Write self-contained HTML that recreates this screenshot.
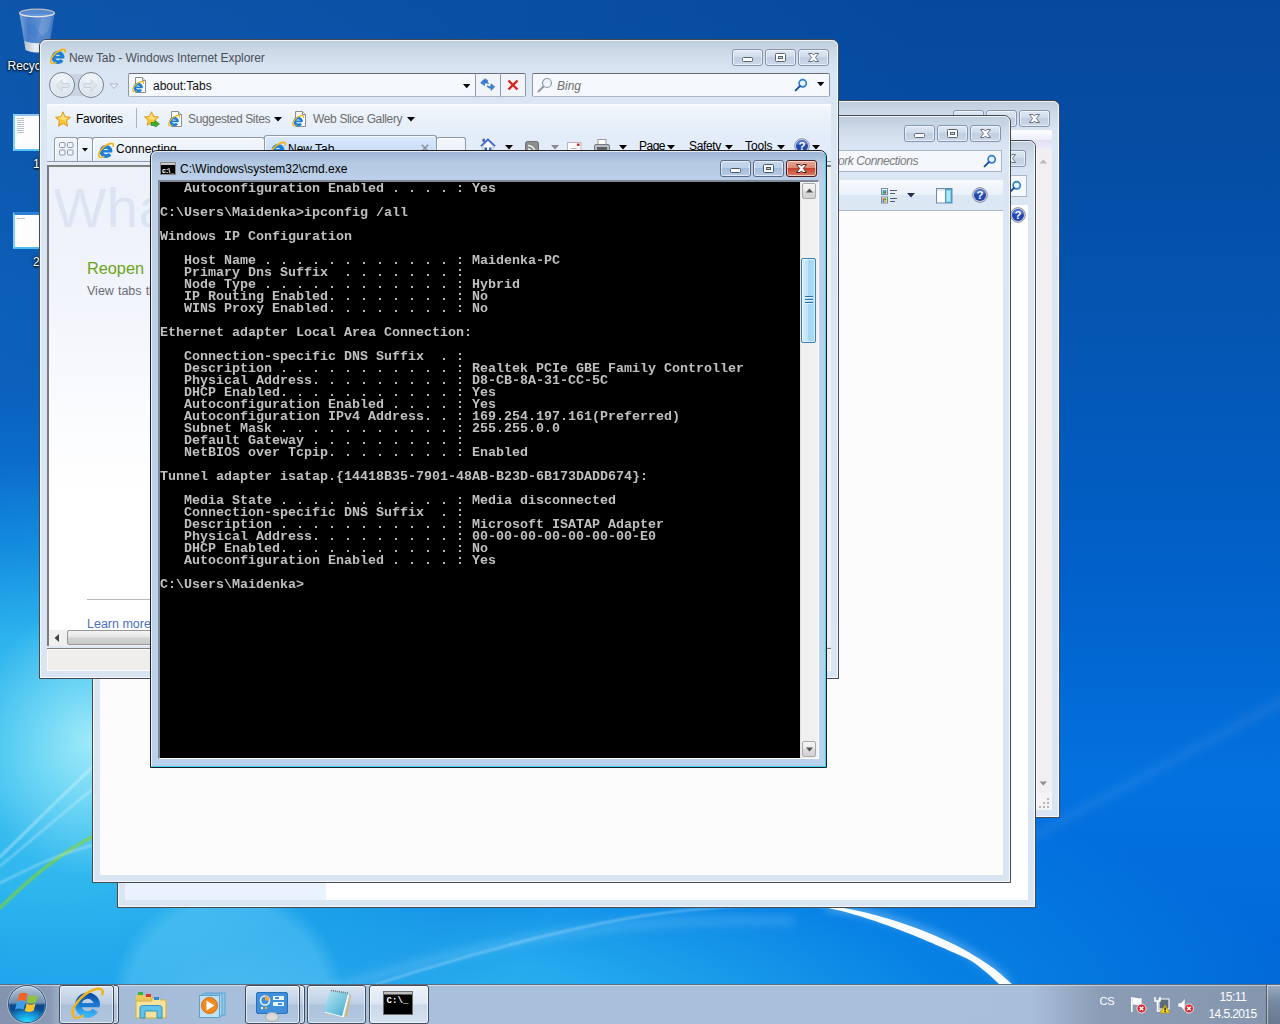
<!DOCTYPE html>
<html lang="en">
<head>
<meta charset="utf-8">
<title>Desktop</title>
<style>
*{box-sizing:border-box;margin:0;padding:0}
html,body{width:1280px;height:1024px;overflow:hidden}
body{position:relative;font-family:"Liberation Sans",sans-serif;font-size:12px;color:#000;background:#0a5fb8}
.abs{position:absolute}
#wall{left:0;top:0;width:1280px;height:1024px;
 background:
 radial-gradient(circle 118px at 228px 1004px, rgba(160,232,250,.30) 0%, rgba(160,232,250,.24) 85%, rgba(160,232,250,0) 100%),
 radial-gradient(ellipse 120px 135px at 92px 742px, rgba(175,241,251,.85) 0%, rgba(150,233,249,.5) 50%, rgba(130,226,248,0) 100%),
 radial-gradient(ellipse 560px 370px at 55px 765px, rgba(70,196,241,1) 0%, rgba(46,182,238,.96) 35%, rgba(24,158,232,.66) 60%, rgba(12,128,222,.3) 82%, rgba(8,110,210,0) 100%),
 radial-gradient(ellipse 1150px 330px at 200px 1050px, rgba(62,194,243,1) 0%, rgba(40,178,240,.9) 38%, rgba(12,148,238,.58) 68%, rgba(6,120,226,0) 100%),
 linear-gradient(90deg, rgba(40,130,215,.22) 0%, rgba(40,130,215,.13) 35%, rgba(40,130,215,0) 72%),
 linear-gradient(180deg,#05499d 0%,#054da4 15%,#0457b4 35%,#0160c8 55%,#0372e0 77%,#0066d6 97%);}
/* generic window */
.win{position:absolute;border:1px solid #44484f;border-radius:7px 7px 0 0}
.win.inact{background:linear-gradient(180deg,#bfccdc 0px,#cbd8e6 11px,#d6e2ef 24px,#dae6f3 36px,#d9e5f3 100%)}
.win.act{background:linear-gradient(180deg,#9bb4d3 0px,#b4c9e3 12px,#bcd0e8 30px,#b9d1ea 100%)}
.win::before{content:"";position:absolute;left:0;top:0;right:0;bottom:0;border:1px solid rgba(255,255,255,.75);border-radius:6px 6px 0 0;pointer-events:none}
.win.act{border-color:#1c1e22}
.win.act::before{border-right-color:#35d2f3;border-bottom-color:#35d2f3}
.cap{position:absolute;height:17px;width:31px;border:1px solid #8593b2;border-radius:3px;background:linear-gradient(180deg,#dfe8f3 0%,#d0dcea 45%,#c0cfe1 50%,#cbd8e8 100%);box-shadow:inset 0 0 0 1px rgba(255,255,255,.6)}
.cap svg{position:absolute;left:-1px;top:-1px}
.cap.red{background:linear-gradient(180deg,#eaa898 0%,#dd8673 47%,#c5432c 50%,#d97f66 100%);border-color:#4c1d1c}
.t{position:absolute;white-space:pre;line-height:1}
.navc{width:26px;height:26px;border-radius:13px;border:1px solid #707b8d;background:radial-gradient(circle at 50% 30%,#f4f7fb 0%,#e3e9f1 55%,#d3dbe6 100%);box-shadow:inset 0 0 0 1px rgba(255,255,255,.7)}
.tab{border:1px solid #8e99a8;border-bottom:none;border-radius:3px 3px 0 0;background:linear-gradient(180deg,#f3f7fc 0%,#e6eef9 100%);box-shadow:inset 1px 1px 0 rgba(255,255,255,.8)}
.tbtn{border:1px solid #414c5e;border-radius:3px;background:linear-gradient(180deg,rgba(235,242,250,.75) 0%,rgba(205,219,236,.55) 48%,rgba(178,198,222,.45) 52%,rgba(190,208,230,.5) 100%);box-shadow:inset 0 0 0 1px rgba(255,255,255,.6)}
.tbtn.on{background:linear-gradient(180deg,#eef3f9 0%,#dde7f3 48%,#c9d8ea 52%,#d6e2f0 100%)}
</style>
</head>
<body>
<svg width="0" height="0" style="position:absolute;left:0;top:0"><defs>
<symbol id="ie" viewBox="0 0 32 32"><defs><linearGradient id="ieg" x1="0" y1="0" x2="0" y2="1"><stop offset="0" stop-color="#0c4fa8"/><stop offset=".55" stop-color="#1f86dc"/><stop offset="1" stop-color="#37b4f2"/></linearGradient></defs><path d="M24.040 22.430A8.600 8.600 0 1 1 25.600 17.500" fill="none" stroke="url(#ieg)" stroke-width="5.800"/><path d="M9 17.500h19" stroke="#1b78d2" stroke-width="3.800"/><path d="M5 28.500C-1.500 22 12.500 6.500 24 3c5-1.500 8 .5 6.500 4.500" fill="none" stroke="#f3b417" stroke-width="2.300" stroke-linecap="round"/><path d="M5 28.500c1.500 1.500 5 .5 8-1.500" fill="none" stroke="#f3b417" stroke-width="1.700" stroke-linecap="round"/></symbol>
<symbol id="ies" viewBox="0 0 32 32"><path d="M24.300 22.800A8.800 8.800 0 1 1 25.800 17.500" fill="none" stroke="#1b7fd8" stroke-width="7"/><path d="M9 17.500h19.500" stroke="#1b7fd8" stroke-width="4.600"/><path d="M5 28.500C-1.500 22 12.500 6.500 24 3c5-1.500 8 .5 6.500 4.500" fill="none" stroke="#f3b417" stroke-width="3.200" stroke-linecap="round"/><path d="M5 28.500c1.500 1.500 5 .5 8-1.500" fill="none" stroke="#f3b417" stroke-width="2.400" stroke-linecap="round"/></symbol>
<symbol id="iepg" viewBox="0 0 16 16"><path d="M3.500.5h7l3 3v12h-10z" fill="#fff" stroke="#8d8d8d"/><path d="M10.500.5v3h3" fill="#e8e8e8" stroke="#8d8d8d"/><use href="#ies" x="-.5" y="3.500" width="12.500" height="12.500"/></symbol>
<symbol id="star" viewBox="0 0 16 16"><path d="M8 .8l2.200 4.900 5.300.6-4 3.600 1.100 5.300L8 12.500l-4.600 2.700 1.100-5.300-4-3.600 5.300-.6z" fill="#fbc62c" stroke="#d9921a" stroke-width=".9" stroke-linejoin="round"/><path d="M8 2.800l1.500 3.500 3.700.4-2.800 2.500.2.800C8 9 5.500 8.500 3 7l2.500-.6z" fill="#fde58a" fill-opacity=".8"/></symbol>
<symbol id="mag" viewBox="0 0 14 14"><circle cx="8.700" cy="5.300" r="3.600" fill="#e8f4fd" stroke="#2d7fd1" stroke-width="1.700"/><path d="M5.900 8.100l-4.300 4.300" stroke="#1b4f9a" stroke-width="2" stroke-linecap="round"/></symbol>
<symbol id="helpbg" viewBox="0 0 16 16"><circle cx="8" cy="8" r="7.400" fill="#c9ced8" stroke="#80889a" stroke-width=".8"/><circle cx="8" cy="8" r="6" fill="#2248b0"/><path d="M2.300 7a5.800 5.800 0 0 1 11.400 0C10 5.200 6 5.200 2.300 7z" fill="#5b82dc" fill-opacity=".8"/></symbol>
</defs></svg>
<div id="wall" class="abs"></div>
<svg class="abs" style="left:0;top:0" width="1280" height="1024">
 <defs><filter id="bl1"><feGaussianBlur stdDeviation=".7"/></filter><filter id="bl2"><feGaussianBlur stdDeviation="1.2"/></filter><filter id="bl5"><feGaussianBlur stdDeviation="4"/></filter></defs>
 <g fill="none" stroke-linecap="round">
  <path d="M300 1000C480 940 620 915 790 921" stroke="#fff" stroke-opacity=".13" stroke-width="10" filter="url(#bl5)"/>
  <path d="M830 906C880 912 940 935 970 953S1000 974 1012 984L1001 986C990 975 975 962 966 958S880 918 830 908.500Z" fill="#fff" fill-opacity=".97" stroke="none" filter="url(#bl1)"/>
  <path d="M830 907C880 912 940 935 970 954S1000 975 1008 985" stroke="#fff" stroke-opacity=".35" stroke-width="7" filter="url(#bl5)"/>
  <path d="M330 1000C450 958 590 920 680 911S790 905 830 907" stroke="#fff" stroke-opacity=".42" stroke-width="1.600" filter="url(#bl2)"/>
  <path d="M0 908C30 878 60 853 94 836" stroke="#86d628" stroke-width="2.200" filter="url(#bl2)"/>
  <path d="M0 857C30 828 60 797 94 766" stroke="#fff" stroke-opacity=".6" stroke-width="1.600" filter="url(#bl2)"/>
  <path d="M0 866C30 842 60 815 94 788" stroke="#fff" stroke-opacity=".5" stroke-width="1.400" filter="url(#bl2)"/>
  <path d="M0 883C30 868 60 853 94 845" stroke="#fff" stroke-opacity=".5" stroke-width="1.600" filter="url(#bl2)"/>
  <path d="M1030 838L1290 697" stroke="#fff" stroke-opacity=".09" stroke-width="7" filter="url(#bl5)"/>
 </g>
</svg>
<!-- desktop icons -->
<svg class="abs" style="left:14px;top:6px" width="44" height="50" viewBox="0 0 44 50"><defs><linearGradient id="rb" x1="0" y1="0" x2="1" y2="0"><stop offset="0" stop-color="#9cbbe6" stop-opacity=".75"/><stop offset=".25" stop-color="#5f8fd4" stop-opacity=".7"/><stop offset=".6" stop-color="#7ea6e0" stop-opacity=".7"/><stop offset="1" stop-color="#4f7fca" stop-opacity=".8"/></linearGradient><linearGradient id="rbb" x1="0" y1="0" x2="1" y2="0"><stop offset="0" stop-color="#b9c2cf"/><stop offset=".45" stop-color="#f4f6f8"/><stop offset="1" stop-color="#aab3c0"/></linearGradient></defs><path d="M5.500 8L11.500 44Q23 49 34.500 44L40.500 8Z" fill="url(#rb)"/><path d="M28 10l10 1-4 14-12 10z" fill="#fff" fill-opacity=".12"/><path d="M10.300 35Q23 39.500 35.700 35L34.500 44Q23 49 11.500 44Z" fill="url(#rbb)" fill-opacity=".95"/><path d="M14 20c3-3 7-2 8 2s5 4 6 8-3 6-6 4-3-6-6-6-4-5-2-8z" fill="#3f6fd0" fill-opacity=".35"/><ellipse cx="23" cy="7" rx="17.500" ry="3.800" fill="#6d9ee0" fill-opacity=".75" stroke="#b9bcc2" stroke-width="1.300"/><path d="M5.700 7.500a17.500 3.800 0 0 0 34.600 0" fill="none" stroke="#f2f2f2" stroke-width=".9"/></svg>
<div class="t" style="left:7.500px;top:60px;font-size:12px;color:#fff;text-shadow:0 1px 2px #000,0 0 3px #000">Recycle Bin</div>
<div class="abs" style="left:13px;top:114px;width:44px;height:37px;background:#fdfdfd;border:2px solid #58c3ee;border-top-color:#8fc4ee;border-left-color:#7fd2f3"><div class="abs" style="left:2px;top:2px;width:7px;height:16px;background:repeating-linear-gradient(180deg,#b9c4d2 0,#b9c4d2 1px,#fff 1px,#fff 2px)"></div></div>
<div class="t" style="left:33px;top:158px;font-size:12px;color:#fff;text-shadow:0 1px 2px #000,0 0 3px #000">1</div>
<div class="abs" style="left:13px;top:212px;width:44px;height:37px;background:#fdfdfd;border:2px solid #4fbdec;border-top:3px solid #2f7fd6;border-left-color:#7fd2f3"><div class="abs" style="left:2px;top:3px;width:8px;height:1px;background:#b9c4d2"></div></div>
<div class="t" style="left:33px;top:256px;font-size:12px;color:#fff;text-shadow:0 1px 2px #000,0 0 3px #000">2</div>



<!-- Window A (back-most) -->
<div class="win inact" style="left:300px;top:100px;width:760px;height:718px">
  <div class="cap" style="left:652px;top:9px"></div>
  <div class="cap" style="left:685px;top:9px"></div>
  <div class="cap" style="left:718px;top:9px"><svg width="31" height="17"><path d="M10.500 4.500h3.600l1.400 1.600 1.400-1.600h3.600l-3.100 4 3.100 4h-3.600l-1.400-1.600-1.400 1.600h-3.600l3.100-4z" fill="#fff" stroke="#4b5563" stroke-width=".8"/></svg></div>
  <div class="abs" style="left:8px;top:29px;width:743px;height:19px;background:linear-gradient(180deg,#fdfdff 0%,#eeeefb 50%,#e1e1f4 55%,#ececfa 100%)"></div>
  <div class="abs" style="left:8px;top:48px;width:743px;height:661px;background:#fff"></div>
  <div class="abs" style="left:735px;top:48px;width:16px;height:661px;background:#f0f0f0;border-left:1px solid #fafafa"></div>
  <svg class="abs" style="left:734px;top:54px" width="17" height="12"><path d="M4.500 8.500l3.800-4 3.800 4z" fill="#b9b9b9"/></svg>
  <svg class="abs" style="left:734px;top:677px" width="17" height="12"><path d="M4.500 3.500l3.800 4 3.800-4z" fill="#8f8f8f"/></svg>
  <div class="abs" style="left:735px;top:692px;width:16px;height:17px;background:#f4f4f4"></div>
  <svg class="abs" style="left:737px;top:695px" width="14" height="13"><g fill="#b5b5b5"><rect x="9" y="2" width="2" height="2"/><rect x="9" y="6" width="2" height="2"/><rect x="5" y="6" width="2" height="2"/><rect x="9" y="10" width="2" height="2"/><rect x="5" y="10" width="2" height="2"/><rect x="1" y="10" width="2" height="2"/></g></svg>
</div>

<!-- Window B -->
<div class="win inact" style="left:117px;top:140px;width:919px;height:768px">
  <div class="cap" style="left:811px;top:9px"></div>
  <div class="cap" style="left:844px;top:9px"></div>
  <div class="cap" style="left:877px;top:9px"><svg width="31" height="17"><path d="M10.500 4.500h3.600l1.400 1.600 1.400-1.600h3.600l-3.100 4 3.100 4h-3.600l-1.400-1.600-1.400 1.600h-3.600l3.100-4z" fill="#fff" stroke="#4b5563" stroke-width=".8"/></svg></div>
  <div class="abs" style="left:700px;top:34px;width:209px;height:22px;background:#f4f7fb;border:1px solid #aab6c6"></div>
  <div class="abs" style="left:7px;top:64px;width:903px;height:695px;background:#fff"></div>
  <div class="abs" style="left:7px;top:64px;width:201px;height:695px;background:#e9f2fd"></div>

  <svg class="abs" style="left:890px;top:38.500px" width="14" height="14"><use href="#mag"/></svg>
  <svg class="abs" style="left:892px;top:66px" width="16" height="16" viewBox="0 0 16 16"><use href="#helpbg"/><text x="8" y="12.200" text-anchor="middle" font-family="Liberation Sans, sans-serif" font-weight="bold" font-size="11.500" fill="#fff">?</text></svg>
</div>

<!-- Window C : Network Connections -->
<div class="win inact" style="left:92px;top:115px;width:919px;height:768px">
  <div class="cap" style="left:811px;top:9px"><svg width="31" height="17"><rect x="10.500" y="8.500" width="10" height="4" rx="1" fill="#fff" stroke="#5a6472"/></svg></div>
  <div class="cap" style="left:844px;top:9px"><svg width="31" height="17"><rect x="10.500" y="4.500" width="10" height="8" rx="1" fill="#fff" stroke="#5a6472"/><rect x="13.500" y="7.500" width="4" height="2" fill="#c9d6e6" stroke="#5a6472"/></svg></div>
  <div class="cap" style="left:877px;top:9px"><svg width="31" height="17"><path d="M10.500 4.500h3.600l1.400 1.600 1.400-1.600h3.600l-3.100 4 3.100 4h-3.600l-1.400-1.600-1.400 1.600h-3.600l3.100-4z" fill="#fff" stroke="#4b5563" stroke-width=".8"/></svg></div>
  <div id="c-search" class="abs" style="left:700px;top:34px;width:209px;height:22px;background:#f4f7fb;border:1px solid #aab6c6"></div>
  <div class="t" id="c-stext" style="left:745px;top:39px;font-size:12px;letter-spacing:-.45px;font-style:italic;color:#7c7c7c">ork Connections</div>
  <div id="c-tool" class="abs" style="left:7px;top:64px;width:903px;height:31px;background:linear-gradient(180deg,#f7fafd 0%,#eaf1f9 48%,#dce7f4 52%,#dde8f5 100%);border-bottom:1px solid #a9b9d0"></div>

  <svg class="abs" style="left:890px;top:38px" width="14" height="14"><use href="#mag"/></svg>
  <svg class="abs" style="left:788px;top:72px" width="17" height="16" viewBox="0 0 17 16"><rect x=".5" y=".5" width="6" height="6" fill="#fff" stroke="#7a8aa0"/><rect x="1.500" y="2" width="4" height="3.500" fill="#5aa0d8"/><path d="M1.500 5.500l1.500-2 1 1 1-1.500v2.500z" fill="#3b8a3b"/><rect x=".5" y="9" width="6" height="6" fill="#fff" stroke="#7a8aa0"/><rect x="1.500" y="10.300" width="2" height="2" fill="#e5482e"/><rect x="3.500" y="10.300" width="2" height="2" fill="#3fae2a"/><rect x="1.500" y="12.300" width="2" height="2" fill="#2f6fd6"/><rect x="3.500" y="12.300" width="2" height="2" fill="#f2b418"/><path d="M9 2.500h7M9 5.500h5M9 10.500h7M9 13.500h5" stroke="#4e5d75" stroke-width="1"/></svg>
  <svg class="abs" style="left:814px;top:77px" width="8" height="5"><path d="M0 0h8l-4 4.500z" fill="#1e2f55"/></svg>
  <svg class="abs" style="left:843px;top:72px" width="17" height="16" viewBox="0 0 17 16"><rect x=".5" y=".5" width="15.500" height="14.500" fill="#fdfdfd" stroke="#6f86ad"/><rect x="1" y="1" width="14.500" height="2" fill="#dfe9f5"/><rect x="9.500" y="1.500" width="6" height="13" fill="#7fd0e8" stroke="#4a9fc4"/><rect x="11" y="3" width="3" height="10" fill="#b5e6f4"/></svg>
  <svg class="abs" style="left:879px;top:71px" width="16" height="16" viewBox="0 0 16 16"><use href="#helpbg"/><text x="8" y="12.200" text-anchor="middle" font-family="Liberation Sans, sans-serif" font-weight="bold" font-size="11.500" fill="#fff">?</text></svg>
  <div class="abs" style="left:7px;top:95px;width:903px;height:664px;background:#fcfcfc"></div>
</div>


<!-- IE window -->
<div class="abs" id="ie" style="left:0;top:0;width:0;height:0">
  <div class="win inact" style="left:39px;top:39px;width:800px;height:640px"></div>
  <!-- title -->
  <svg class="abs" style="left:48.500px;top:48px" width="17" height="17"><use href="#ies"/></svg>
  <div class="t" id="ie-title" style="left:69px;top:52px;font-size:12px;letter-spacing:-.06px;color:#4a4f58">New Tab - Windows Internet Explorer</div>
  <div class="cap" style="left:732px;top:49px"><svg width="31" height="17"><rect x="10.500" y="8.500" width="10" height="4" rx="1" fill="#fff" stroke="#5a6472"/></svg></div>
  <div class="cap" style="left:765px;top:49px"><svg width="31" height="17"><rect x="10.500" y="4.500" width="10" height="8" rx="1" fill="#fff" stroke="#5a6472"/><rect x="13.500" y="7.500" width="4" height="2" fill="#c9d6e6" stroke="#5a6472"/></svg></div>
  <div class="cap" style="left:798px;top:49px"><svg width="31" height="17"><path d="M10.500 4.500h3.600l1.400 1.600 1.400-1.600h3.600l-3.100 4 3.100 4h-3.600l-1.400-1.600-1.400 1.600h-3.600l3.100-4z" fill="#fff" stroke="#4b5563" stroke-width=".8"/></svg></div>
  <!-- nav buttons -->
  <div class="abs" style="left:56px;top:74px;width:42px;height:22px;background:#c9d5e3;border-radius:11px"></div>
  <div class="abs navc" style="left:49px;top:72px"></div>
  <div class="abs navc" style="left:78px;top:72px"></div>
  <svg class="abs" style="left:49px;top:72px" width="55" height="26"><path d="M7 13.500l6-6v4h7v4h-7v4z" fill="#dfe6ee" stroke="#c3ccd7" stroke-width=".8"/><path d="M48 13.500l-6-6v4h-7v4h7v4z" fill="#dfe6ee" stroke="#c3ccd7" stroke-width=".8"/></svg>
  <svg class="abs" style="left:109px;top:83px" width="10" height="7"><path d="M1 1h8l-4 4.500z" fill="#f3f6fa" stroke="#a9b4c2" stroke-width="1"/></svg>
  <!-- address bar -->
  <div class="abs" style="left:128px;top:73px;width:348px;height:24px;background:#f5f8fc;border:1px solid #8894a4;border-color:#676e79 #8e98a6 #adb6c2 #8e98a6;border-radius:2px 0 0 2px"></div>
  <div class="abs" style="left:475px;top:73px;width:26px;height:24px;background:#f1f5fa;border:1px solid #8894a4;border-color:#676e79 #8e98a6 #adb6c2 #8e98a6"></div>
  <div class="abs" style="left:500px;top:73px;width:26px;height:24px;background:#f1f5fa;border:1px solid #8894a4;border-color:#676e79 #8e98a6 #adb6c2 #8e98a6;border-radius:0 2px 2px 0"></div>
  <div class="abs" style="left:532px;top:73px;width:298px;height:24px;background:#f5f8fc;border:1px solid #8894a4;border-color:#676e79 #8e98a6 #adb6c2 #8e98a6;border-radius:2px"></div>
  <div class="t" id="ie-url" style="left:153px;top:80px;font-size:12px;color:#111">about:Tabs</div>
  <div class="t" id="ie-bing" style="left:557px;top:80px;font-size:12px;font-style:italic;color:#6f6f6f">Bing</div>
  <svg class="abs" style="left:463px;top:84px" width="8" height="5"><path d="M0 0h7.400l-3.700 4.200z" fill="#000"/></svg>
  <svg class="abs" style="left:817px;top:82px" width="8" height="5"><path d="M0 0h7.400l-3.700 4.200z" fill="#000"/></svg>
  <!-- favorites bar -->
  <div class="abs" style="left:47px;top:104px;width:784px;height:30px;background:linear-gradient(180deg,#fdfeff 0px,#f3f7fc 2px,#ebf2fa 12px,#e3edf9 30px)"></div>
  <div class="t" id="ie-fav" style="left:76px;top:113px;font-size:12px;letter-spacing:-.3px;color:#000">Favorites</div>
  <div class="abs" style="left:136px;top:108px;width:1px;height:20px;background:#a7b4c4"></div>
  <div class="t" id="ie-sug" style="left:188px;top:113px;font-size:12px;letter-spacing:-.35px;color:#6d6d6d">Suggested Sites</div>
  <svg class="abs" style="left:274px;top:117px" width="8" height="5"><path d="M0 0h8l-4 4.500z" fill="#000"/></svg>
  <div class="t" id="ie-wsg" style="left:313px;top:113px;font-size:12px;letter-spacing:-.35px;color:#6d6d6d">Web Slice Gallery</div>
  <svg class="abs" style="left:407px;top:117px" width="8" height="5"><path d="M0 0h8l-4 4.500z" fill="#000"/></svg>
  <!-- tab row -->
  <div class="abs" style="left:47px;top:134px;width:784px;height:28px;background:#e3edf9"></div>
  <div class="abs" style="left:47px;top:161px;width:784px;height:5px;background:linear-gradient(180deg,#8e99a8 0,#8e99a8 1px,#eaf1fa 1px,#dfe8f3 100%)"></div>
  <div class="abs tab" style="left:54px;top:137px;width:24px;height:25px"></div>
  <div class="abs tab" style="left:77px;top:137px;width:16px;height:25px"></div>
  <div class="abs tab" style="left:92px;top:137px;width:173px;height:25px"></div>
  <div class="abs tab" style="left:264px;top:135px;width:173px;height:27px;background:linear-gradient(180deg,#dbe9fc 0%,#cfe2fa 35%,#c2d9f7 100%)"></div>
  <div class="abs tab" style="left:436px;top:137px;width:30px;height:25px"></div>
  <div class="abs" style="left:47px;top:161px;width:218px;height:1px;background:#8e99a8"></div>
  <div class="abs" style="left:436px;top:161px;width:395px;height:1px;background:#8e99a8"></div>
  <svg class="abs" style="left:59px;top:142px" width="15" height="14"><g fill="#f4f6fa" stroke="#8e97a8" stroke-width="1"><rect x=".5" y=".5" width="5.500" height="5" rx="1"/><rect x="8.500" y=".5" width="5.500" height="5" rx="1"/><rect x=".5" y="8" width="5.500" height="5" rx="1"/><rect x="8.500" y="8" width="5.500" height="5" rx="1"/></g></svg>
  <svg class="abs" style="left:82px;top:148px" width="6" height="4"><path d="M0 0h6l-3 3.500z" fill="#000"/></svg>
  <div class="t" id="ie-conn" style="left:116px;top:143px;font-size:12px;color:#000">Connecting...</div>
  <div class="t" id="ie-nt" style="left:288px;top:143px;font-size:12px;color:#000">New Tab</div>
  <!-- command bar labels -->
  <div class="t" id="ie-page" style="left:639px;top:140px;font-size:12px;letter-spacing:-.5px;color:#000">Page</div>
  <div class="t" id="ie-safety" style="left:689px;top:140px;font-size:12px;letter-spacing:-.37px;color:#000">Safety</div>
  <div class="t" id="ie-tools" style="left:745px;top:140px;font-size:12px;letter-spacing:-.1px;color:#000">Tools</div>
  <svg class="abs" style="left:667px;top:145px" width="8" height="5"><path d="M0 0h8l-4 4.500z" fill="#000"/></svg>
  <svg class="abs" style="left:724.500px;top:145px" width="8" height="5"><path d="M0 0h8l-4 4.500z" fill="#000"/></svg>
  <svg class="abs" style="left:777px;top:145px" width="8" height="5"><path d="M0 0h8l-4 4.500z" fill="#000"/></svg>
  <svg class="abs" style="left:812px;top:145px" width="8" height="5"><path d="M0 0h8l-4 4.500z" fill="#000"/></svg>

  <!-- IE icons -->
  <svg class="abs" style="left:132px;top:77px" width="16" height="16"><use href="#iepg"/></svg>
  <svg class="abs" style="left:480px;top:78px" width="16" height="14" viewBox="0 0 16 14"><path d="M2 8.500C2 4.500 5 2.800 8 3.500V1l4 3.800-4 3.500V6C6 5.500 4 6.500 2 8.500z" fill="#3f86d8" stroke="#1d5cae" stroke-width=".6" transform="scale(.62) translate(1 0)"/><path d="M1.200 5.200l3.800-3.700v2.200c2.200-.3 3.600.8 4 2.700C7.900 5.600 6.600 5.400 5 5.700v2.500z" fill="#3f86d8" stroke="#1d5cae" stroke-width=".5" transform="translate(-.5 -.5)"/><path d="M14.800 8.800L11 12.500v-2.200c-2.200.3-3.600-.8-4-2.700 1.100.8 2.400 1 4 .7V5.800z" fill="#3f86d8" stroke="#1d5cae" stroke-width=".5"/></svg>
  <svg class="abs" style="left:507px;top:79px" width="12" height="12"><path d="M1.500 1.500l9 9M10.500 1.500l-9 9" stroke="#d7261f" stroke-width="2.400"/></svg>
  <svg class="abs" style="left:537px;top:77px" width="16" height="16" viewBox="0 0 16 16"><circle cx="10" cy="6" r="4.500" fill="#eef4fa" stroke="#8f9aa8" stroke-width="1.200"/><path d="M6.500 9.500l-5 5" stroke="#8f9aa8" stroke-width="2" stroke-linecap="round"/></svg>
  <svg class="abs" style="left:794px;top:78px" width="14" height="14"><use href="#mag"/></svg>
  <svg class="abs" style="left:55px;top:111px" width="16" height="16"><use href="#star"/></svg>
  <svg class="abs" style="left:144px;top:111px" width="17" height="16" viewBox="0 0 17 16"><use href="#star" width="15" height="15"/><path d="M7 11.500h4v-2l4.500 3.500-4.500 3.500v-2H7z" fill="#3fae2a" stroke="#1f7a12" stroke-width=".6"/></svg>
  <svg class="abs" style="left:168px;top:111px" width="16" height="16"><use href="#iepg"/></svg>
  <svg class="abs" style="left:292px;top:111px" width="16" height="16"><use href="#iepg"/></svg>
  <svg class="abs" style="left:96.500px;top:141.500px" width="17" height="17"><use href="#ies"/></svg>
  <svg class="abs" style="left:268.500px;top:140.500px" width="17" height="17"><use href="#ies"/></svg>
  <svg class="abs" style="left:421px;top:144px" width="8" height="8"><path d="M.8.800l6.400 6.400M7.200.8L.8 7.200" stroke="#8a8f99" stroke-width="1.600"/></svg>
  <!-- command bar icons -->
  <svg class="abs" style="left:480px;top:138px" width="16" height="14" viewBox="0 0 16 14"><path d="M3 8v6h10V8L8 3z" fill="#fdfdfd" stroke="#a0a7b3" stroke-width=".7"/><path d="M.8 8.300L8 1.200l7.200 7.100" fill="none" stroke="#2f55c8" stroke-width="1.500"/><rect x="2.500" y=".8" width="2.300" height="3" fill="#2f55c8"/><rect x="4.500" y="9.500" width="2.500" height="4" fill="#3a5a9c"/><rect x="9" y="9.500" width="2.500" height="3" fill="#2f6fd6"/></svg>
  <svg class="abs" style="left:505px;top:145px" width="8" height="5"><path d="M0 0h8l-4 4.500z" fill="#000"/></svg>
  <svg class="abs" style="left:525px;top:141px" width="14" height="12" viewBox="0 0 14 12"><rect x=".5" y=".5" width="13" height="13" rx="2" fill="#8d8d8d" stroke="#6f6f6f"/><path d="M3 4.500a7 7 0 0 1 7 7M3 8a3.500 3.500 0 0 1 3.500 3.500" fill="none" stroke="#f2f2f2" stroke-width="1.600"/></svg>
  <svg class="abs" style="left:551px;top:145px" width="8" height="5"><path d="M0 0h8l-4 4.500z" fill="#8a8a8a"/></svg>
  <svg class="abs" style="left:567px;top:142px" width="15" height="10" viewBox="0 0 15 10"><rect x=".5" y=".5" width="13.500" height="10" fill="#fbfbfb" stroke="#b9b9b9"/><rect x="10" y="1.500" width="2.500" height="2.500" fill="#e0262c"/><path d="M3.500 6.500h6" stroke="#b5b5b5"/></svg>
  <svg class="abs" style="left:594px;top:139px" width="16" height="13" viewBox="0 0 16 13"><rect x="4" y=".5" width="8" height="6" fill="#fff" stroke="#9a9a9a"/><rect x=".5" y="5.500" width="15" height="8" rx="1.500" fill="#b9bcc2" stroke="#74787f"/><rect x="3" y="8" width="10" height="5" fill="#5d6067"/><rect x="13" y="9" width="1.500" height="1.500" fill="#7be04a"/></svg>
  <svg class="abs" style="left:619px;top:145px" width="8" height="5"><path d="M0 0h8l-4 4.500z" fill="#000"/></svg>
  <svg class="abs" style="left:794px;top:138px" width="16" height="16" viewBox="0 0 16 16"><use href="#helpbg"/><text x="8" y="12.200" text-anchor="middle" font-family="Liberation Sans, sans-serif" font-weight="bold" font-size="11.500" fill="#fff">?</text></svg>
  <!-- page -->
  <div class="abs" style="left:47px;top:165px;width:784px;height:481px;background:#f0f0f0;border-left:2px solid #808080;border-top:2px solid #808080;border-left-color:#7b7b7b"></div>
  <div class="abs" style="left:49px;top:167px;width:782px;height:463px;background:linear-gradient(180deg,#edf1fa 0px,#f1f4fb 120px,#fbfcfe 260px,#fff 330px)"></div>
  <div class="abs" style="left:814px;top:167px;width:17px;height:463px;background:#f0f0f0"></div>
  <div class="t" id="ie-wha" style="left:53.500px;top:180px;font-size:56px;letter-spacing:.5px;color:#dce4f4">What</div>
  <div class="t" id="ie-reopen" style="left:87px;top:260px;font-size:16.300px;word-spacing:3px;color:#6aa516">Reopen closed tabs</div>
  <div class="t" id="ie-view" style="left:87px;top:285px;font-size:12.500px;word-spacing:.6px;color:#6c6c78">View tabs that you</div>
  <div class="abs" style="left:87px;top:599px;width:700px;height:1px;background:#b9b9b9"></div>
  <div class="t" id="ie-learn" style="left:87px;top:618px;font-size:12.500px;color:#4d70c8">Learn more about</div>
  <!-- h scrollbar -->
  <div class="abs" style="left:49px;top:630px;width:782px;height:16px;background:#f0f0f0"></div>
  <svg class="abs" style="left:54px;top:634px" width="6" height="9"><path d="M5 0v8l-4.500-4z" fill="#444"/></svg>
  <div class="abs" style="left:67px;top:630px;width:720px;height:15px;border:1px solid #979797;border-radius:2px;background:linear-gradient(180deg,#f4f4f4 0%,#e6e6e6 45%,#d2d2d2 55%,#c9c9c9 100%)"></div>
  <!-- status bar -->
  <div class="abs" style="left:47px;top:646px;width:784px;height:2px;background:#dfe8f3"></div>
  <div class="abs" style="left:47px;top:648px;width:784px;height:1px;background:#7d7d7d"></div>
  <div class="abs" style="left:47px;top:649px;width:784px;height:22px;background:#f0eded;border:1px solid #fdfdfd"></div>
</div>



<!-- CMD window -->
<div class="abs" id="cmd" style="left:0;top:0;width:0;height:0">
  <div class="win act" style="left:150px;top:150px;width:677px;height:618px"></div>
  <svg class="abs" style="left:160px;top:162px" width="16" height="13"><rect x=".5" y=".5" width="15" height="12" fill="#000" stroke="#8a8a8a"/><rect x="1" y="1" width="14" height="2" fill="#c8c8c8"/><text x="2" y="10.500" font-family="Liberation Sans, sans-serif" font-size="7" font-weight="bold" fill="#fff">c:\_</text></svg>
  <div class="t" id="cmd-title" style="left:180px;top:163px;font-size:12px;color:#000">C:\Windows\system32\cmd.exe</div>
  <div class="cap" style="left:720px;top:160px;border-color:#5a6a85;background:linear-gradient(180deg,#c6d8ee 0%,#bdd1ea 47%,#a5bedc 50%,#b6cce7 100%)"><svg width="31" height="17"><rect x="10.500" y="8.500" width="10" height="4" rx="1" fill="#fff" stroke="#4a5566"/></svg></div>
  <div class="cap" style="left:753px;top:160px;border-color:#5a6a85;background:linear-gradient(180deg,#c6d8ee 0%,#bdd1ea 47%,#a5bedc 50%,#b6cce7 100%)"><svg width="31" height="17"><rect x="10.500" y="4.500" width="10" height="8" rx="1" fill="#fff" stroke="#4a5566"/><rect x="13.500" y="7.500" width="4" height="2" fill="#b9cbe2" stroke="#4a5566"/></svg></div>
  <div class="cap red" style="left:786px;top:160px"><svg width="31" height="17"><path d="M10.500 4.500h3.600l1.400 1.600 1.400-1.600h3.600l-3.100 4 3.100 4h-3.600l-1.400-1.600-1.400 1.600h-3.600l3.100-4z" fill="#fff" stroke="#4d2320" stroke-width="1"/></svg></div>
  <div class="abs" style="left:158px;top:180px;width:661px;height:579px;background:#000;border:2px solid #7f8895;border-right:1px solid #fff;border-bottom:1px solid #fff"></div>
  <pre class="abs" id="cmd-text" style="left:160px;top:183px;height:576px;overflow:hidden;font-family:'Liberation Mono',monospace;font-weight:bold;font-size:12px;line-height:12px;width:576px;transform:scaleX(1.1111);transform-origin:0 0;color:#c0c0c0">   Autoconfiguration Enabled . . . . : Yes

C:\Users\Maidenka&gt;ipconfig /all

Windows IP Configuration

   Host Name . . . . . . . . . . . . : Maidenka-PC
   Primary Dns Suffix  . . . . . . . : 
   Node Type . . . . . . . . . . . . : Hybrid
   IP Routing Enabled. . . . . . . . : No
   WINS Proxy Enabled. . . . . . . . : No

Ethernet adapter Local Area Connection:

   Connection-specific DNS Suffix  . : 
   Description . . . . . . . . . . . : Realtek PCIe GBE Family Controller
   Physical Address. . . . . . . . . : D8-CB-8A-31-CC-5C
   DHCP Enabled. . . . . . . . . . . : Yes
   Autoconfiguration Enabled . . . . : Yes
   Autoconfiguration IPv4 Address. . : 169.254.197.161(Preferred)
   Subnet Mask . . . . . . . . . . . : 255.255.0.0
   Default Gateway . . . . . . . . . : 
   NetBIOS over Tcpip. . . . . . . . : Enabled

Tunnel adapter isatap.{14418B35-7901-48AB-B23D-6B173DADD674}:

   Media State . . . . . . . . . . . : Media disconnected
   Connection-specific DNS Suffix  . : 
   Description . . . . . . . . . . . : Microsoft ISATAP Adapter
   Physical Address. . . . . . . . . : 00-00-00-00-00-00-00-E0
   DHCP Enabled. . . . . . . . . . . : No
   Autoconfiguration Enabled . . . . : Yes

C:\Users\Maidenka&gt;</pre>
  <!-- scrollbar -->
  <div class="abs" style="left:800px;top:182px;width:18px;height:576px;background:#f0f0f0;border-left:1px solid #e3e3e3"></div>
  <div class="abs" style="left:802px;top:183px;width:14px;height:16px;border:1px solid #a9a9a9;border-radius:2px;background:linear-gradient(180deg,#f6f6f6 0%,#e9e9e9 50%,#dcdcdc 51%,#d3d3d3 100%)"></div>
  <svg class="abs" style="left:805.500px;top:188px" width="8" height="6"><path d="M0 4.500l3.500-4 3.500 4z" fill="#505050"/></svg>
  <div class="abs" style="left:802px;top:741px;width:14px;height:16px;border:1px solid #a9a9a9;border-radius:2px;background:linear-gradient(180deg,#f6f6f6 0%,#e9e9e9 50%,#dcdcdc 51%,#d3d3d3 100%)"></div>
  <svg class="abs" style="left:805.500px;top:747px" width="8" height="6"><path d="M0 .5l3.500 4 3.500-4z" fill="#505050"/></svg>
  <div class="abs" style="left:801px;top:258px;width:15px;height:85px;border:1px solid #3c7fb1;border-radius:2px;background:linear-gradient(90deg,#d6edfa 0%,#c2e4f6 45%,#a6d7f2 50%,#a9d9f2 100%);box-shadow:inset 0 0 0 1px rgba(255,255,255,.55)"></div>
  <svg class="abs" style="left:805px;top:296px" width="8" height="9"><g stroke="#2f6f9f" stroke-width="1"><path d="M0 .5h8M0 3.500h8M0 6.500h8"/></g><g stroke="#d9f0fb" stroke-width="1"><path d="M0 1.500h8M0 4.500h8M0 7.500h8"/></g></svg>
</div>




<!-- Taskbar -->
<div class="abs" id="tb" style="left:0;top:984px;width:1280px;height:40px;background:linear-gradient(90deg,#8493ad 0px,#8a9ab4 50px,#a4bad6 64px,#a9c0dc 300px,#a8bfdb 1030px,#8b9cb6 1100px,#8595ae 1280px);border-top:1px solid #5c6b80;box-shadow:inset 0 1px 0 rgba(255,255,255,.45)"></div>
<div class="abs" style="left:0;top:984px;width:0;height:0">
  <!-- start orb -->
  <div class="abs" style="left:9px;top:2px;width:36px;height:36px;border-radius:18px;background:radial-gradient(ellipse 62% 42% at 50% 100%,#25e2ff 0%,rgba(24,160,228,.85) 55%,rgba(10,80,150,0) 100%),linear-gradient(180deg,#b9cadb 0%,#8aa3bd 30%,#6f8fb0 47%,#0a4a8b 53%,#0b5aa2 100%);box-shadow:0 0 0 1px rgba(16,60,110,.85),0 0 0 2px rgba(210,225,240,.45),inset 0 1px 1px rgba(255,255,255,.6)"></div>
  <svg class="abs" style="left:15px;top:8px" width="26" height="24" viewBox="0 0 26 24"><path d="M4.200 1.800c3.200-1.500 5.600-1.400 8.600.1l-2 7.200c-2.800-1.400-5.300-1.500-8.500-.1z" fill="#f0642a"/><path d="M14 2.900c3 1.500 5.800 1.600 9 .1l-2.100 7.300c-3.100 1.500-5.900 1.400-8.900-.1z" fill="#8cc43c"/><path d="M2 10.400c3.100-1.500 5.600-1.400 8.500 0l-2 7.100c-2.800-1.400-5.400-1.500-8.500 0z" fill="#3f9ee8"/><path d="M11.700 11.500c3 1.500 5.800 1.600 8.900.1l-2 7.200c-3.100 1.500-5.900 1.500-8.900 0z" fill="#fbc42a"/></svg>
  <!-- IE button (stacked) -->
  <div class="abs tbtn" style="left:63px;top:1px;width:56px;height:39px;clip-path:inset(0 0 0 51px)"></div>
  <div class="abs tbtn" style="left:59px;top:1px;width:55px;height:39px"></div>
  <svg class="abs" style="left:68.500px;top:2px" width="35" height="35"><use href="#ie"/></svg>
  <!-- explorer -->
  <svg class="abs" style="left:135px;top:6px" width="33" height="31" viewBox="0 0 33 31"><path d="M1 5h8l2 2h9v4H1z" fill="#e9c55c"/><rect x="3" y="2" width="5" height="3" fill="#2fb344"/><rect x="11" y="4" width="5" height="3" fill="#d6382c"/><path d="M17 8h7l1.500 2H31v18H1V11h16z" fill="#f7e29a" stroke="#d3ad45" stroke-width="1"/><rect x="19" y="7" width="5" height="3" fill="#2a8be0"/><path d="M5 28V18c0-1.500 1-2.500 2.500-2.500h17c1.500 0 2.500 1 2.500 2.500v10h-5v-7H10v7z" fill="#5fc2ea" stroke="#2f93c4" stroke-width="1"/></svg>
  <!-- wmp -->
  <svg class="abs" style="left:199px;top:7px" width="28" height="30" viewBox="0 0 28 30"><rect x="6" y="2" width="20" height="22" fill="#8fc8ea" stroke="#5ba3cf"/><rect x="3" y="3" width="20" height="22" fill="#a9d6f0" stroke="#5ba3cf"/><rect x=".5" y="4.500" width="20" height="22" fill="#bfe1f5" stroke="#5ba3cf"/><circle cx="10.500" cy="14.500" r="8" fill="#f28a1e" stroke="#d96c0c"/><path d="M7.500 9.500l8 5-8 5z" fill="#fff"/></svg>
  <!-- control panel (stacked) -->
  <div class="abs tbtn" style="left:249px;top:1px;width:56px;height:39px;clip-path:inset(0 0 0 51px)"></div>
  <div class="abs tbtn" style="left:245px;top:1px;width:55px;height:39px"></div>
  <svg class="abs" style="left:256px;top:8.300px" width="33" height="30" viewBox="0 0 33 30"><rect x=".5" y=".5" width="31" height="21" rx="1.500" fill="#3f8fdc" stroke="#2a6fb8"/><circle cx="9" cy="8.500" r="4.500" fill="none" stroke="#e8f3fc" stroke-width="1.600"/><path d="M9 4v4.500h4.500A4.500 4.500 0 0 0 9 4z" fill="#f6a623"/><rect x="17" y="4" width="11" height="4" fill="#e8f3fc"/><rect x="17" y="10" width="11" height="4" fill="#e8f3fc"/><rect x="19" y="5" width="4" height="2" fill="#3f8fdc"/><rect x="22" y="11" width="4" height="2" fill="#3f8fdc"/><circle cx="6" cy="16" r="1.200" fill="#e8f3fc"/><circle cx="10" cy="16" r="1.200" fill="#f6a623"/><ellipse cx="16" cy="25" rx="6.500" ry="4.500" fill="#d9d9d9" stroke="#a8a8a8"/></svg>
  <!-- notepad -->
  <div class="abs tbtn" style="left:307px;top:1px;width:59px;height:39px"></div>
  <svg class="abs" style="left:320px;top:5px" width="34" height="32" viewBox="0 0 34 32"><path d="M27 4l4 2-4 22-4-2z" fill="#d4b36a"/><path d="M12 2l18 3-6 24-20-5z" fill="#f6f8f9" stroke="#b9c3c9"/><path d="M11 1.500l17 2.500-6 23-19-5z" fill="#7fd0e6"/><path d="M11 1.500l17 2.500-6 23-19-5z" fill="url(#ng)"/><defs><linearGradient id="ng" x1="0" y1="0" x2="1" y2="1"><stop offset="0" stop-color="#c8eef8" stop-opacity=".9"/><stop offset="1" stop-color="#3ba7cb" stop-opacity=".9"/></linearGradient></defs><path d="M11 1.500l17 2.500" stroke="#7a7a7a" stroke-width="1.600" stroke-dasharray="1 1"/></svg>
  <!-- cmd (active) -->
  <div class="abs tbtn on" style="left:369px;top:1px;width:60px;height:39px"></div>
  <svg class="abs" style="left:383px;top:7px" width="31" height="25" viewBox="0 0 31 25"><rect x=".5" y=".5" width="29" height="23" fill="#000" stroke="#6e6e6e"/><rect x="1" y="1" width="28" height="2.500" fill="#bdbdbd"/><text x="3.500" y="11.800" font-family="Liberation Mono, monospace" font-size="9" font-weight="bold" fill="#fff" textLength="22">C:\_</text></svg>
  <!-- tray -->
  <div class="t" id="tb-cs" style="left:1099.500px;top:12px;font-size:11px;letter-spacing:-.3px;color:#fff">CS</div>
  <svg class="abs" style="left:1129px;top:12px" width="18" height="18" viewBox="0 0 18 18"><rect x="2" y="1" width="1.600" height="15" fill="#fff"/><path d="M3.600 2c3-1.500 5 1.500 9 0v7c-4 1.500-6-1.500-9 0z" fill="#fff"/><circle cx="12.500" cy="12.500" r="4.500" fill="#d8272d" stroke="#fff" stroke-width=".8"/><path d="M10.700 10.700l3.600 3.600M14.300 10.700l-3.600 3.600" stroke="#fff" stroke-width="1.500"/></svg>
  <svg class="abs" style="left:1153px;top:12px" width="18" height="18" viewBox="0 0 18 18"><rect x="6" y="3" width="10" height="10" fill="#5c6b7e" stroke="#e9edf2" stroke-width="1.200"/><path d="M2 1v4h5V1M4.500 5v10h3" fill="none" stroke="#fff" stroke-width="1.500"/><path d="M12 9l5 8H7z" fill="#f7d117" stroke="#a8890a" stroke-width=".6"/><rect x="11.500" y="11.500" width="1.200" height="3" fill="#000"/><rect x="11.500" y="15" width="1.200" height="1.200" fill="#000"/></svg>
  <svg class="abs" style="left:1177px;top:12px" width="18" height="18" viewBox="0 0 18 18"><path d="M1 7h3l4-4.500v13L4 11H1z" fill="#fff" stroke="#8a97a8" stroke-width=".6"/><circle cx="12" cy="12.500" r="4.500" fill="#d8272d" stroke="#fff" stroke-width=".8"/><path d="M10.200 10.700l3.600 3.600M13.800 10.700l-3.600 3.600" stroke="#fff" stroke-width="1.500"/></svg>
  <div class="t" id="tb-time" style="left:1219.500px;top:7px;font-size:12px;letter-spacing:-.45px;color:#fff">15:11</div>
  <div class="t" id="tb-date" style="left:1208.500px;top:24px;font-size:12px;letter-spacing:-.6px;color:#fff">14.5.2015</div>
  <div class="abs" style="left:1266px;top:1px;width:14px;height:39px;border-left:1px solid #4e5a6b;background:linear-gradient(180deg,#9aabc2 0%,#7889a2 40%,#67788f 100%);box-shadow:inset 1px 1px 0 rgba(255,255,255,.5)"></div>
</div>


</body>
</html>
